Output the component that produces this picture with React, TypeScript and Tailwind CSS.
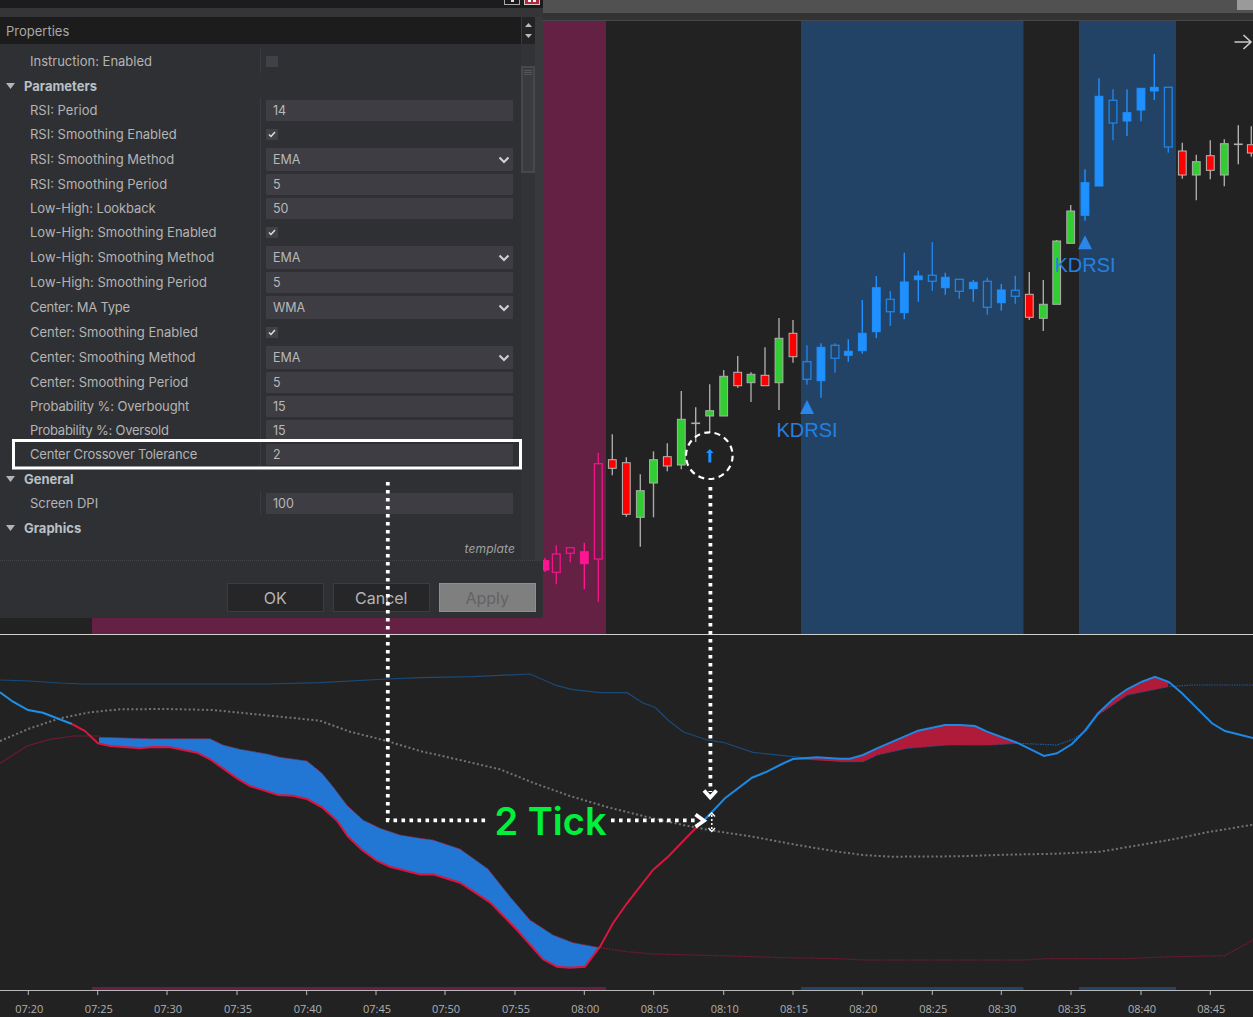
import React from "react";

type Kind = "g" | "r" | "d" | "bf" | "bh" | "pf" | "ph";
type C = [number, number, number, number, number, Kind];

const candles: C[] = [
  [545, 558, 560.7, 570, 572, "pf"],
  [556.3, 545.3, 554, 572.3, 584.3, "ph"],
  [570.3, 547.7, 547.7, 553.3, 562.3, "ph"],
  [584.3, 542.7, 551.7, 563.7, 589.3, "pf"],
  [598.3, 452.7, 463.7, 559, 601.7, "ph"],
  [612.3, 434.3, 459.7, 468.3, 475.3, "r"],
  [626.3, 457.3, 462.7, 514.3, 516.7, "r"],
  [640.3, 474.3, 490.7, 517.3, 546.7, "g"],
  [653.5, 451.3, 459.7, 483, 517.3, "g"],
  [667.3, 443.3, 456.7, 466, 471.3, "r"],
  [681.3, 391, 419.3, 465, 469.3, "g"],
  [695.7, 407.3, 423.3, 423.3, 442, "d"],
  [709.7, 384.3, 410.7, 416, 432.7, "g"],
  [723.7, 370, 376.3, 416, 416, "g"],
  [737.7, 356, 372.3, 385.7, 387.7, "r"],
  [751, 372.3, 374.3, 382.7, 402, "g"],
  [765, 347.3, 375.3, 385.7, 385.7, "r"],
  [779, 318, 338.3, 382.7, 410, "g"],
  [793, 320, 333.3, 356.7, 362.7, "r"],
  [807, 345.3, 361.7, 379.3, 384.7, "bh"],
  [821, 343.3, 347.3, 380.7, 397.7, "bf"],
  [835, 343.3, 345.3, 358.3, 372.7, "bh"],
  [848.3, 339.3, 351.3, 355.3, 361.7, "bf"],
  [862.3, 300, 333.3, 350.7, 353.7, "bf"],
  [876.3, 276, 287.7, 331.7, 338, "bf"],
  [890.3, 291, 299.3, 311.7, 326, "bh"],
  [904.3, 252.7, 282, 312.7, 319.3, "bf"],
  [918.3, 270.7, 276, 279.7, 301.7, "bf"],
  [932.3, 242, 275.3, 281.3, 290.7, "bh"],
  [945.3, 272.7, 277.3, 287.7, 294.7, "bf"],
  [959.3, 279, 279.3, 291.3, 298.7, "bh"],
  [973.3, 280, 282.3, 288.7, 301.7, "bf"],
  [987.3, 277.7, 281.3, 307.3, 314.7, "bh"],
  [1001.3, 284, 290, 302.7, 310.7, "bf"],
  [1015.3, 275.7, 290.3, 296.3, 303.7, "bh"],
  [1029.3, 272, 294.3, 317.3, 320, "r"],
  [1043.3, 280, 304.3, 318.3, 331, "g"],
  [1056.7, 240, 241, 304.3, 304.3, "g"],
  [1070.7, 205, 211, 243.3, 243.3, "g"],
  [1085, 169.3, 182.7, 215.3, 220.7, "bf"],
  [1099, 78.3, 96.3, 186, 186, "bf"],
  [1113, 89.3, 100.3, 123, 140.3, "bh"],
  [1127, 89.3, 112.7, 121, 136, "bf"],
  [1141, 88, 88.3, 110, 121.3, "bf"],
  [1154.3, 54, 87.3, 91, 100, "bf"],
  [1168.3, 87, 87.3, 147, 152.7, "bh"],
  [1182.3, 142.7, 151, 175, 178.7, "r"],
  [1196.3, 154.7, 161.7, 175, 200.3, "g"],
  [1210.3, 140.3, 155.7, 170.3, 179.3, "r"],
  [1224.3, 139.3, 143.7, 175, 186.3, "g"],
  [1238.3, 125.3, 144.3, 144.3, 164.3, "d"],
  [1251.3, 126.3, 144.7, 153, 156.7, "r"],
];

const style: Record<Kind, { wick: string; fill: string; stroke: string }> = {
  g: { wick: "#a8a8a8", fill: "#32cd32", stroke: "#b0b0b0" },
  r: { wick: "#a8a8a8", fill: "#ff0000", stroke: "#b8b8b8" },
  d: { wick: "#b0b0b0", fill: "#b0b0b0", stroke: "#b0b0b0" },
  bf: { wick: "#1e90ff", fill: "#1e90ff", stroke: "#1e90ff" },
  bh: { wick: "#1e84e8", fill: "none", stroke: "#1e84e8" },
  pf: { wick: "#ff1493", fill: "#ff1493", stroke: "#ff1493" },
  ph: { wick: "#ee1489", fill: "none", stroke: "#ee1489" },
};

type P = [number, number];
const pts = (a: P[]) => a.map((p) => p.join(",")).join(" ");

const center: P[] = [[0,741],[30,728.3],[60,718.3],[90,712.3],[120,709.3],[167,709],[213,710],[253,714],[320,720.7],[350,731.7],[387,741],[420,751],[460,760],[500,769.3],[533,782.7],[570,796],[607,807],[647,817],[683,825],[713,830.7],[753,836.7],[797,845],[840,852],[863,855],[893,856.7],[957,856.3],[1007,854.7],[1057,853.7],[1100,851.7],[1140,845],[1173,839.3],[1207,832.3],[1253,824.7]];

const upperA: P[] = [[0,680],[30,681],[60,683],[83,684],[267,684],[320,682.7],[387,679],[420,677.7],[473,676.7],[530,674],[557,685.7],[573,689.7],[600,692.7],[627,692.7],[643,703],[655,707.3],[668,720],[683,731.7],[707,740],[723,742.3],[753,752.3],[793,756.7],[840,761]];
const upperB: P[] = [[840,761.7],[863,761.7],[877,755],[907,748.3],[947,745],[990,745],[1017,743.3],[1057,745],[1073,739.3],[1087,730],[1098,715],[1127,695],[1168,686.7],[1193,685],[1253,685]];

const lowerA: P[] = [[0,763.3],[27,746],[50,739.3],[73,736],[100,736]];
const fillTop: P[] = [[99,737.3],[150,738.7],[210,738.7],[223,745],[240,749.3],[267,754],[280,757.3],[307,761],[322,773.3],[333,786.7],[347,805.3],[363,820],[380,828.3],[400,835],[420,838.3],[433,840],[460,849],[488,869],[510,896.7],[530,920],[553,935],[573,942.7],[600,947.7]];
const lowerB: P[] = [[600,947.7],[627,951.7],[653,954],[720,955.7],[787,957.7],[840,958.7],[863,960],[1023,960],[1047,958.7],[1123,958.7],[1173,956.7],[1225,955.7],[1253,940]];

const mainBlue1: P[] = [[0,692.3],[13,701.7],[28,710],[43,712.7],[57,718.3],[72,724]];
const mainRed: P[] = [[72,724],[85,731],[98,743.3],[110,746],[140,748.3],[153,747],[170,747.3],[197,752.7],[210,759.3],[237,778.3],[250,786],[278,795],[293,795.7],[307,799],[322,807.3],[337,820.7],[348,836.7],[362,850],[377,861],[390,866.7],[420,874.5],[433,874.3],[460,882.7],[490,902.3],[517,930],[543,959.3],[557,966.7],[570,967.7],[585,966.7],[600,946.7],[613,923.3],[627,903.3],[653,870],[668,856.7],[697,826.7],[705,819.3]];
const mainBlue2: P[] = [[705,819.3],[725,798.3],[752,777.7],[767,771.7],[782,764],[793,759],[817,757.3],[840,758.8],[850,758.7],[863,755],[877,748.3],[918,730.7],[945,725],[960,725],[975,726],[987,731.7],[1017,742.7],[1044,756],[1057,753.3],[1072,744],[1085,730.7],[1098,713.3],[1113,699.3],[1127,689.3],[1142,681.7],[1155,676.7],[1169,682],[1182,693.3],[1197,708.3],[1212,723.3],[1225,731],[1253,738]];

const blueFill: P[] = [...fillTop, [585,966.7],[570,967.7],[557,966.7],[543,959.3],[517,930],[490,902.3],[460,882.7],[433,874.3],[420,874.5],[390,866.7],[377,861],[362,850],[348,836.7],[337,820.7],[322,807.3],[307,799],[293,795.7],[278,795],[250,786],[237,778.3],[210,759.3],[197,752.7],[170,747.3],[153,747],[140,748.3],[110,746],[99,743.5]];
const redFill1: P[] = [[793,759],[817,757.3],[840,758.8],[850,758.7],[863,755],[877,748.3],[918,730.7],[945,725],[960,725],[975,726],[987,731.7],[1017,743.3],[990,745],[947,745],[907,748.3],[877,755],[863,761.7],[840,761.7]];
const redFill2: P[] = [[1098,713.3],[1113,699.3],[1127,689.3],[1142,681.7],[1155,676.7],[1169,682],[1168,686.7],[1127,695],[1098,715]];

const ticks = ["07:20","07:25","07:30","07:35","07:40","07:45","07:50","07:55","08:00","08:05","08:10","08:15","08:20","08:25","08:30","08:35","08:40","08:45"];
const tickX = [28.3,97.7,167,237,306.7,376,445,515,584.3,653.7,723.7,793,862.3,932.3,1001.3,1071,1141,1210.3];

type Row =
  | { t: "group"; name: string }
  | { t: "input"; name: string; value: string; tr?: string }
  | { t: "check"; name: string; on: boolean; tr?: string }
  | { t: "select"; name: string; value: string; tr?: string };

const rows: Row[] = [
  { t: "check", name: "Instruction: Enabled", on: false },
  { t: "group", name: "Parameters" },
  { t: "input", name: "RSI: Period", value: "14" },
  { t: "check", name: "RSI: Smoothing Enabled", on: true },
  { t: "select", name: "RSI: Smoothing Method", value: "EMA" },
  { t: "input", name: "RSI: Smoothing Period", value: "5" },
  { t: "input", name: "Low-High: Lookback", value: "50", tr: "tracking-[-0.1px]" },
  { t: "check", name: "Low-High: Smoothing Enabled", on: true },
  { t: "select", name: "Low-High: Smoothing Method", value: "EMA" },
  { t: "input", name: "Low-High: Smoothing Period", value: "5" },
  { t: "select", name: "Center: MA Type", value: "WMA", tr: "tracking-[-0.25px]" },
  { t: "check", name: "Center: Smoothing Enabled", on: true },
  { t: "select", name: "Center: Smoothing Method", value: "EMA" },
  { t: "input", name: "Center: Smoothing Period", value: "5" },
  { t: "input", name: "Probability %: Overbought", value: "15", tr: "tracking-[-0.12px]" },
  { t: "input", name: "Probability %: Oversold", value: "15", tr: "tracking-[-0.25px]" },
  { t: "input", name: "Center Crossover Tolerance", value: "2", tr: "tracking-[-0.2px]" },
  { t: "group", name: "General" },
  { t: "input", name: "Screen DPI", value: "100" },
  { t: "group", name: "Graphics" },
];

function Chevron() {
  return (
    <svg width="12" height="8" viewBox="0 0 12 8" className="absolute right-[3px] top-[8px]">
      <path d="M1.5 1.5 L6 6 L10.5 1.5" fill="none" stroke="#cfcfcf" strokeWidth="2.2" />
    </svg>
  );
}

function PropRow({ row }: { row: Row }) {
  if (row.t === "group") {
    return (
      <div className="h-[25px] flex items-center text-[13px] font-bold text-[#b9c0c6]">
        <svg width="10" height="6" viewBox="0 0 10 6" className="ml-[6px] mr-[8px]">
          <path d="M0 0 H9 L4.5 6 Z" fill="#b4b4b4" />
        </svg>
        <span className="pt-[2px]">{row.name}</span>
      </div>
    );
  }
  const h = row.t === "select" ? "h-[26px]" : "h-[24px]";
  return (
    <div className={`${h} flex items-center`}>
      <div className={`w-[260px] pl-[30px] pt-[2px] text-[13px] text-[#b4b4b4] whitespace-nowrap ${row.tr ?? ""}`}>{row.name}</div>
      <div className="self-stretch w-px bg-[#3c3c40]" />
      <div className="w-[247px] ml-[5px] flex items-center">
        {row.t === "input" && (
          <div className="w-full h-[21px] bg-[#3d3d43] pl-[7px] text-[#b8b8b8] leading-[21px]">{row.value}</div>
        )}
        {row.t === "select" && (
          <div className="relative w-full h-[23px] bg-[#3d3d43] pl-[7px] text-[#b8b8b8] leading-[23px]">
            {row.value}
            <Chevron />
          </div>
        )}
        {row.t === "check" && (
          <div className="w-[12px] h-[11px] bg-[#404046] flex items-center justify-center">
            {row.on && (
              <svg width="8" height="7" viewBox="0 0 8 7">
                <path d="M1 3.5 L3 5.5 L7 1" fill="none" stroke="#dddddd" strokeWidth="1.5" />
              </svg>
            )}
          </div>
        )}
      </div>
    </div>
  );
}

function Btn({ label, disabled }: { label: string; disabled?: boolean }) {
  return (
    <div
      className={
        disabled
          ? "w-[97.5px] h-[29px] pt-px flex items-center justify-center bg-[#7f7f7f] border border-[#8f8f8f] text-[#636363] text-[16px]"
          : "w-[97.5px] h-[29px] pt-px flex items-center justify-center bg-[#262628] border border-[#3c3c3e] text-[#b4b4b4] text-[16px]"
      }
    >
      {label}
    </div>
  );
}

function Dialog() {
  return (
    <div className="absolute left-0 top-0 w-[543px] h-[618px] bg-[#2f3033] flex flex-col font-['Inter',sans-serif] text-[12.5px]">
      <div className="h-[8px] bg-[#1c1c1c] flex justify-end gap-[4px] pr-[3px] overflow-hidden">
        <div className="w-[16px] h-[5px] bg-[#1a1a1a] border border-[#aaaaaa] border-t-0 flex justify-center">
          <div className="w-[3px] h-[2px] bg-[#dddddd]" />
        </div>
        <div className="w-[16px] h-[5px] bg-[#b02a3a] border border-[#cccccc] border-t-0 flex justify-center gap-[2px]">
          <div className="w-[3px] h-[2px] bg-[#ffffff]" />
          <div className="w-[3px] h-[2px] bg-[#ffffff]" />
        </div>
      </div>
      <div className="h-[9px] bg-[#353538]" />
      <div className="flex flex-col border-r-[8px] border-[#39393b]">
        <div className="h-[27px] flex bg-[#1c1c1c]">
          <div className="flex-1 pl-[6px] leading-[28px] text-[13px] text-[#a8a8a8]">Properties</div>
          <div className="w-[14px] bg-[#232325] border-l border-[#39393b] flex flex-col items-center justify-center gap-[7px]">
            <svg width="7" height="4" viewBox="0 0 7 4"><path d="M0 4 L3.5 0 L7 4 Z" fill="#bbbbbb" /></svg>
            <svg width="7" height="4" viewBox="0 0 7 4"><path d="M0 0 L7 0 L3.5 4 Z" fill="#bbbbbb" /></svg>
          </div>
        </div>
        <div className="h-[517px] flex border-b border-dotted border-[#46464a]">
          <div className="w-[521px] pt-[5px] relative">
            {rows.map((r) => (
              <PropRow key={r.name} row={r} />
            ))}
            <div className="absolute right-[6px] top-[496px] italic text-[12px] tracking-[0.1px] text-[#a0a0a0]">template</div>
          </div>
          <div className="w-[14px] bg-[#323336] pt-[22px] flex justify-center">
            <div className="w-[14px] h-[107px] border-2 border-[#47484c] bg-[#3a3b3e] flex flex-col items-center gap-[1px] pt-[2px]">
              <div className="w-[8px] h-px bg-[#55565a]" />
              <div className="w-[8px] h-px bg-[#55565a]" />
              <div className="w-[8px] h-px bg-[#55565a]" />
            </div>
          </div>
        </div>
      </div>
      <div className="flex-1 flex justify-end gap-[8.5px] pt-[22px] pr-[7px]">
        <Btn label="OK" />
        <Btn label="Cancel" />
        <Btn label="Apply" disabled />
      </div>
    </div>
  );
}

function Overlay() {
  return (
    <svg className="absolute left-0 top-0 pointer-events-none" width="1253" height="1017" viewBox="0 0 1253 1017">
      <rect x="13.5" y="440.5" width="507" height="27.5" fill="none" stroke="#ffffff" strokeWidth="3" />
      <circle cx="709.3" cy="455.7" r="23.3" fill="none" stroke="#ffffff" strokeWidth="2.2" strokeDasharray="6 4.4" />
      <path d="M709.8 462.5 V452" stroke="#1e90ff" strokeWidth="3" />
      <path d="M706 453 L709.8 449 L713.6 453 Z" fill="#1e90ff" />
      <g stroke="#ffffff" strokeWidth="3.8" strokeDasharray="3.6 4.4" fill="none">
        <path d="M710.4 487 V792" />
        <path d="M387.8 482 V820.3 H487" />
        <path d="M611 820.3 H698" />
      </g>
      <path d="M704 790.5 L710.2 797.5 L716.5 790.5" fill="none" stroke="#ffffff" strokeWidth="3.8" />
      <path d="M695.5 814.5 L704 820.8 L695.5 826.8" fill="none" stroke="#ffffff" strokeWidth="3.8" />
      <path d="M711.8 815 V830" stroke="#ffffff" strokeWidth="1.5" strokeDasharray="2 2" />
      <path d="M708.5 816.5 L711.8 813 L715 816.5 M708.5 828 L711.8 831.5 L715 828" fill="none" stroke="#ffffff" strokeWidth="1.3" />
      <text x="494.5" y="835" fontFamily="Inter, sans-serif" fontSize="38" fontWeight="600" fill="#00f03c">2 Tick</text>
    </svg>
  );
}

export default function App() {
  return (
    <div className="relative w-[1253px] h-[1017px] bg-[#222222] overflow-hidden flex flex-col">
      <div className="h-[13px] bg-[#515151] flex justify-end">
        <div className="w-[16px] h-[10px] bg-[#9a9a9a]" />
      </div>
      <div className="h-[7px] bg-[#333333]" />
      <div className="h-[1px] bg-[#48484c]" />
      <svg width="1253" height="613" viewBox="0 21 1253 613" className="block">
        <rect x="92" y="21" width="514" height="613" fill="#652144" />
        <rect x="801" y="21" width="222.5" height="613" fill="#234366" />
        <rect x="1079" y="21" width="97" height="613" fill="#234366" />
        {candles.map(([x, wt, bt, bb, wb, k], i) => {
          const s = style[k];
          return (
            <g key={i}>
              <line x1={x} x2={x} y1={wt} y2={bt} stroke={s.wick} strokeWidth="1.4" />
              <line x1={x} x2={x} y1={bb} y2={wb} stroke={s.wick} strokeWidth="1.4" />
              {k === "d" ? (
                <line x1={x - 4.4} x2={x + 4.4} y1={bt} y2={bt} stroke={s.stroke} strokeWidth="1.6" />
              ) : (
                <rect
                  x={x - 3.9}
                  y={bt}
                  width="7.8"
                  height={bb - bt}
                  fill={s.fill}
                  stroke={s.stroke}
                  strokeWidth={k === "bh" || k === "ph" ? 1.3 : 1}
                />
              )}
            </g>
          );
        })}
        <path d="M800 414 L807 400 L814 414 Z" fill="#2a86e8" />
        <path d="M1078 249.3 L1085 235.3 L1092 249.3 Z" fill="#2a86e8" />
        <text x="776.5" y="436.7" fontFamily="'Liberation Sans', sans-serif" fontSize="20" fill="#2480e0">KDRSI</text>
        <text x="1054.5" y="272.3" fontFamily="'Liberation Sans', sans-serif" fontSize="20" fill="#2480e0">KDRSI</text>
        <path d="M1234.5 42 H1251 M1243.5 35 L1251 42 L1243.5 49" fill="none" stroke="#cccccc" strokeWidth="1.6" />
      </svg>
      <div className="h-[1px] bg-[#cfcfcf]" />
      <svg width="1253" height="382" viewBox="0 635 1253 382" className="block">
        <polyline points={pts(center)} fill="none" stroke="#747474" strokeWidth="2" strokeDasharray="2 2.4" />
        <polyline points={pts(upperA)} fill="none" stroke="#1c4a78" strokeWidth="1.2" />
        <polyline points={pts(upperB)} fill="none" stroke="#1e5a98" strokeWidth="1.2" strokeDasharray="1.5 1" />
        <polyline points={pts(lowerA)} fill="none" stroke="#6e1a30" strokeWidth="1.2" />
        <polyline points={pts(lowerB)} fill="none" stroke="#7a1830" strokeWidth="1.2" strokeDasharray="2 1" />
        <polygon points={pts(blueFill)} fill="#2277d4" />
        <polygon points={pts(redFill1)} fill="#b01b3a" />
        <polygon points={pts(redFill2)} fill="#b01b3a" />
        <polyline points={pts(fillTop)} fill="none" stroke="#8a2a50" strokeWidth="1" strokeDasharray="1.5 1" />
        <polyline points={pts(mainBlue1)} fill="none" stroke="#1e90e8" strokeWidth="2" />
        <polyline points={pts(mainRed)} fill="none" stroke="#d8163f" strokeWidth="2" />
        <polyline points={pts(mainBlue2)} fill="none" stroke="#1e88e5" strokeWidth="2" />
        <rect x="92" y="987" width="514" height="3" fill="#652144" />
        <rect x="801" y="987" width="222.5" height="3" fill="#234366" />
        <rect x="1079" y="987" width="97" height="3" fill="#234366" />
        <rect x="0" y="990" width="1253" height="1" fill="#b8b8b8" />
        {tickX.map((x, i) => (
          <g key={i}>
            <line x1={x} x2={x} y1="990" y2="995" stroke="#b8b8b8" strokeWidth="1" />
            <text x={x + 1} y="1013" textAnchor="middle" fontFamily="'Open Sans', sans-serif" fontSize="11" fill="#b0b0b0">
              {ticks[i]}
            </text>
          </g>
        ))}
      </svg>
      <Dialog />
      <Overlay />
    </div>
  );
}
